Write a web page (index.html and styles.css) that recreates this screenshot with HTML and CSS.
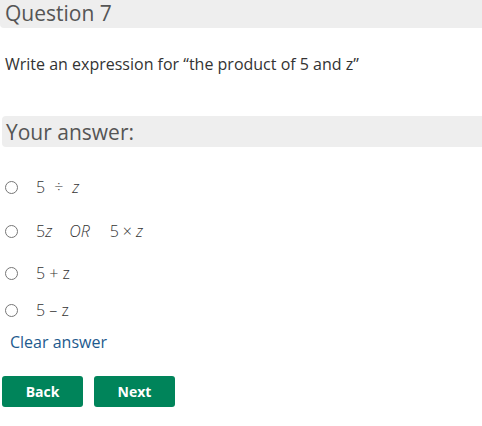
FILE: index.html
```html
<!DOCTYPE html>
<html>
<head>
<meta charset="utf-8">
<link rel="stylesheet" href="styles.css">
</head>
<body>
<div class="page">
  <h2 class="qhead">Question 7</h2>
  <p class="qtext">Write an expression for “the product of 5 and z”</p>
  <h3 class="ahead">Your answer:</h3>
  <ul class="options">
    <li class="opt o1"><input type="radio" name="a"><span class="lbl">5<span class="sp"></span>÷<span class="sp"></span><i>z</i></span></li>
    <li class="opt o2"><input type="radio" name="a"><span class="lbl">5<i>z</i><span class="wide1"></span><i>OR</i><span class="wide2"></span>5<span class="sm"></span>×<span class="sm"></span><i>z</i></span></li>
    <li class="opt o3"><input type="radio" name="a"><span class="lbl">5 + z</span></li>
    <li class="opt o4"><input type="radio" name="a"><span class="lbl">5 – z</span></li>
  </ul>
  <a class="clear" href="#">Clear answer</a>
  <div class="buttons">
    <button class="btn">Back</button>
    <button class="btn">Next</button>
  </div>
</div>
</body>
</html>
```
FILE: styles.css
```css
html, body { margin: 0; padding: 0; background: #fff; }
body { font-family: "Open Sans", sans-serif; color: #333; }
.page { width: 482px; overflow: hidden; }
.qhead {
  margin: 0 -10px 0 0;
  height: 28px;
  background: #eee;
  border-radius: 0 0 0 4px;
  font-weight: 400;
  font-size: 21px;
  line-height: 26px;
  color: #555;
  padding-left: 5px;
}
.qtext {
  margin: 24px 0 0 5px;
  font-size: 16px;
  line-height: 24px;
  color: #333;
}
.ahead {
  margin: 40px -10px 0 2px;
  height: 31px;
  background: #eee;
  border-radius: 4px 0 0 4px;
  font-weight: 400;
  font-size: 21px;
  line-height: 32px;
  color: #555;
  padding-left: 4px;
}
.options { list-style: none; margin: 0; padding: 0; }
.opt { display: flex; align-items: center; height: 24px; }
.opt input { margin: 0 0 0 5px; width: 13px; height: 13px; }
.lbl { margin-left: 18px; font-size: 16px; color: #333; font-weight: 300; display: inline-flex; align-items: baseline; white-space: pre; }
.lbl i { font-style: italic; }
.sp { display: inline-block; width: 9px; }
.sm { display: inline-block; width: 4px; }
.wide1 { display: inline-block; width: 17px; }
.wide2 { display: inline-block; width: 20px; }
.o1 { margin-top: 28px; }
.o2 { margin-top: 20px; }
.o3 { margin-top: 18px; }
.o4 { margin-top: 13px; }
.clear {
  display: block;
  margin: 9px 0 0 10px;
  font-size: 16px;
  line-height: 22px;
  color: #1d5a8e;
  text-decoration: none;
}
.buttons { display: flex; gap: 11px; margin: 23px 0 0 2px; }
.btn {
  width: 81px;
  height: 31px;
  border: none;
  border-radius: 3px;
  background: #00845a;
  color: #fff;
  font-family: "Open Sans", sans-serif;
  font-weight: 700;
  font-size: 14px;
  padding: 0;
}
```
